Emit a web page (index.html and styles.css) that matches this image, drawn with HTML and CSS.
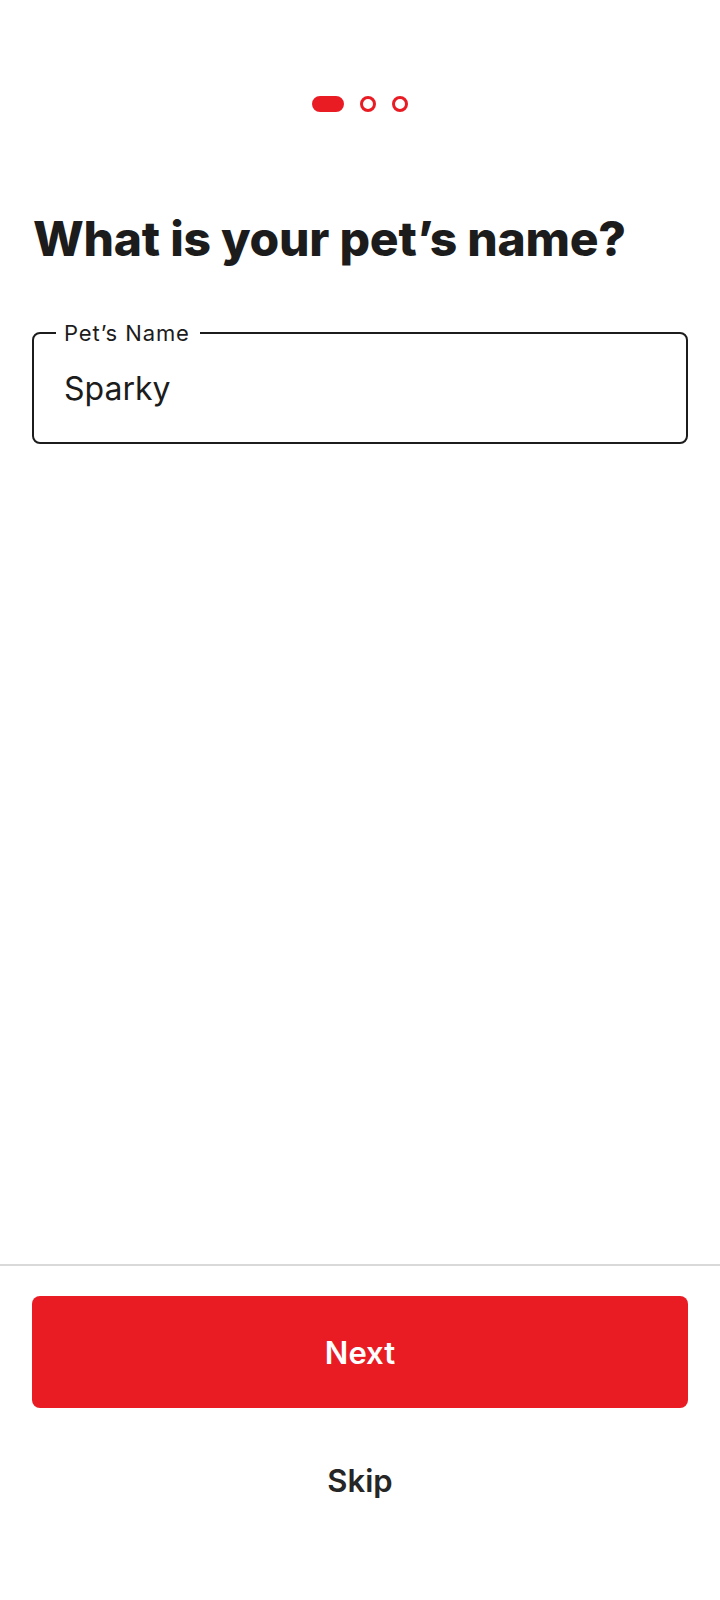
FILE: index.html
```html
<!DOCTYPE html>
<html lang="en">
<head>
    <meta charset="UTF-8">
    <meta name="viewport" content="width=device-width, initial-scale=1.0">
    <title>Pet Name</title>
    <link rel="stylesheet" href="styles.css">
</head>
<body>
    <div class="screen">
        <main class="content">
            <div class="stepper">
                <span class="step active"></span>
                <span class="step"></span>
                <span class="step"></span>
            </div>

            <h1 class="title">What is your pet’s name?</h1>

            <fieldset class="field">
                <legend>Pet’s Name</legend>
                <input type="text" id="petName" name="petName" value="Sparky">
            </fieldset>
        </main>

        <footer class="actions">
            <button class="btn-primary" type="button">Next</button>
            <button class="btn-link" type="button">Skip</button>
        </footer>
    </div>
</body>
</html>
```

FILE: styles.css
```css
body {
    font-family: 'Inter', 'Noto Sans', sans-serif;
    background-color: #ffffff;
    color: #1c1c1c;
    margin: 0;
    padding: 0;
}
.screen {
    display: flex;
    flex-direction: column;
    min-height: 1600px;
}
.content {
    flex: 1;
    padding: 96px 32px 0;
}
.stepper {
    display: flex;
    justify-content: center;
    gap: 16px;
}
.step {
    width: 16px;
    height: 16px;
    border: 3px solid #e91c24;
    border-radius: 50%;
    box-sizing: border-box;
}
.step.active {
    width: 32px;
    border-radius: 8px;
    background-color: #e91c24;
}
h1.title {
    font-size: 48px;
    font-weight: 800;
    line-height: 58px;
    letter-spacing: -0.25px;
    margin: 98px 0 53px 1px;
}
.field {
    margin: 0;
    padding: 0 22px 26px;
    border: 2px solid #1c1c1c;
    border-radius: 8px;
}
.field legend {
    padding: 0 10px 0 8px;
    font-size: 22px;
    line-height: 24px;
    letter-spacing: 0.9px;
    color: #1c1c1c;
}
.field input {
    display: block;
    width: 100%;
    box-sizing: border-box;
    height: 56px;
    margin-top: 15px;
    padding: 0 8px;
    border: none;
    outline: none;
    font-family: inherit;
    font-size: 32px;
    color: #1c1c1c;
    background: transparent;
}
.actions {
    border-top: 2px solid #d9d9d9;
    padding: 30px 32px 92px;
    display: flex;
    flex-direction: column;
}
.btn-primary {
    height: 112px;
    border: none;
    border-radius: 8px;
    background-color: #e91c24;
    color: #ffffff;
    font-family: inherit;
    font-size: 31px;
    font-weight: 600;
    cursor: pointer;
}
.btn-link {
    height: 56px;
    margin-top: 44px;
    border: none;
    background: none;
    color: #262626;
    font-family: inherit;
    font-size: 31px;
    font-weight: 600;
    cursor: pointer;
}
```
